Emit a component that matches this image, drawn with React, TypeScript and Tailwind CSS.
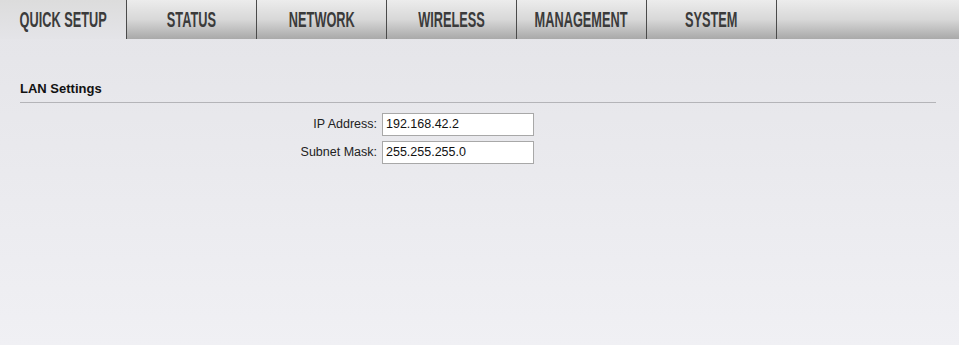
import React from "react";

const tabs = ["QUICK SETUP", "STATUS", "NETWORK", "WIRELESS", "MANAGEMENT", "SYSTEM"];

export default function App() {
  const active = "QUICK SETUP";

  return (
    <div className="w-[959px] h-[345px] flex flex-col bg-gradient-to-b from-[#e4e4e8] to-[#f0f0f4] font-['Liberation_Sans',Arial,sans-serif] text-[#222]">
      {/* ---TABS--- */}
      <nav className="h-[39px] flex shrink-0">
        {tabs.map((t) => (
          <div
            key={t}
            className={`h-full flex items-center justify-center border-r border-r-[#4a4a4a] shadow-[1px_0_0_#f4f4f4] ${
              t === active
                ? "w-[127px] bg-gradient-to-b from-[#dcdcdc] to-[#e4e4e8]"
                : "w-[130px] bg-gradient-to-b from-[#ececec] via-[#d8d8d8] to-[#a9a9a9]"
            }`}
          >
            <span className="inline-block scale-x-[0.58] whitespace-nowrap text-[22px] leading-none font-bold text-[#3b3b3b] pt-[1px]">
              {t}
            </span>
          </div>
        ))}
        <div className="h-full flex-1 bg-gradient-to-b from-[#ececec] via-[#d8d8d8] to-[#a9a9a9]" />
      </nav>

      {/* ---LAN SETTINGS--- */}
      <section className="pl-[20px] pr-[23px] pt-[42px]">
        <h2 className="text-[13px] font-bold leading-[15px] text-[#111] pb-[6px] border-b border-b-[#b4b4b8]">
          LAN Settings
        </h2>
        <div className="mt-[10px] flex flex-col gap-[5px]">
          <div className="flex items-center">
            <label className="w-[362px] text-right text-[12.5px] text-[#222] pr-[5px]">IP Address:</label>
            <div className="w-[152px] h-[23px] bg-white border border-[#a8a8a8] flex items-center px-[3px] text-[12.5px] text-[#111]">
              192.168.42.2
            </div>
          </div>
          <div className="flex items-center">
            <label className="w-[362px] text-right text-[12.5px] text-[#222] pr-[5px]">Subnet Mask:</label>
            <div className="w-[152px] h-[23px] bg-white border border-[#a8a8a8] flex items-center px-[3px] text-[12.5px] text-[#111]">
              255.255.255.0
            </div>
          </div>
        </div>
      </section>
    </div>
  );
}
